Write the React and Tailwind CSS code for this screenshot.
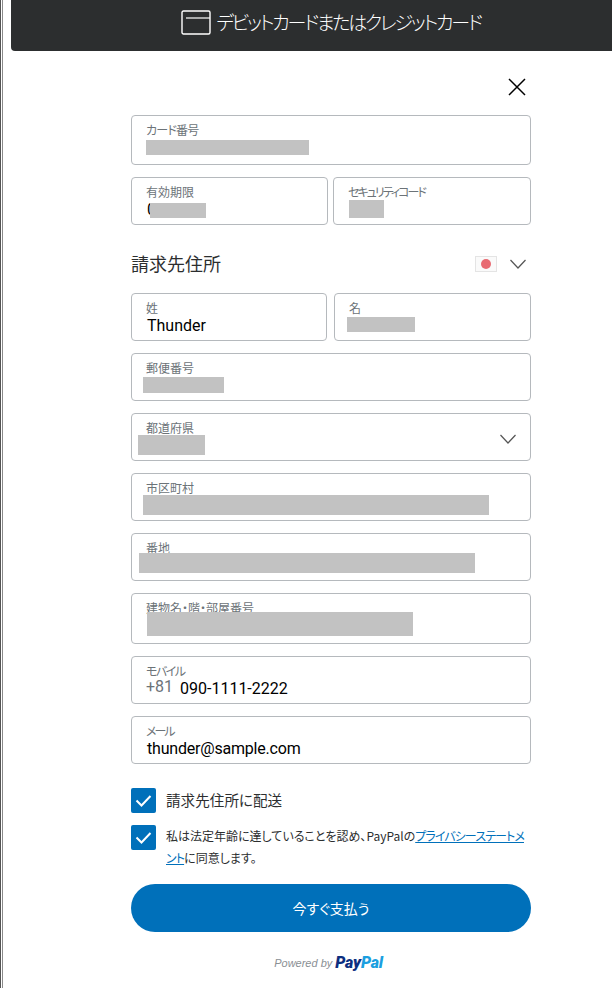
const jp = '"Noto Sans CJK JP","Noto Sans",sans-serif';

function Redact({ className }) {
  return <div className={`absolute bg-[#c2c2c2] ${className}`} />;
}

function Field({ label, className = "", h = "h-[48px]", labelClass = "", value, valueClass = "", children }) {
  return (
    <div className={`relative ${h} rounded border border-[#b5b9bd] bg-white ${className}`}>
      <span className={`absolute left-[14px] top-[6px] text-[12px] leading-[16px] text-[#6c7378] ${labelClass}`}>{label}</span>
      {value && <span className={`absolute left-[15px] top-[21px] font-['Roboto'] text-[16px] leading-[22px] text-black ${valueClass}`}>{value}</span>}
      {children}
    </div>
  );
}

function Chevron({ className }) {
  return (
    <svg className={className} width="18" height="12" viewBox="0 0 18 12" fill="none" stroke="#555" strokeWidth="1.2">
      <path d="M1.5 2 L9 10 L16.5 2" />
    </svg>
  );
}

function Check() {
  return (
    <svg width="25" height="25" viewBox="0 0 25 25" className="shrink-0 rounded-[2px] bg-[#0070ba]" fill="none" stroke="#fff" strokeWidth="2">
      <path d="M5.5 12.5 L10.5 17.5 L19.5 8" />
    </svg>
  );
}

export default function App() {
  return (
    <div className="relative h-[988px] w-[612px] overflow-hidden bg-white [font-feature-settings:'palt']" style={{ fontFamily: jp }}>
      <div className="absolute bottom-0 left-0 top-0 flex w-[3px] justify-between border-l border-[#555]"><div /><div className="w-px bg-[#8a8a8a]" /></div>
      <header className="ml-[11px] flex h-[51px] items-center justify-center rounded-bl-[4px] bg-[#2c2e2f] pb-[6px] pl-[39px] text-[19px] tracking-[-2.2px] text-white">
        <svg width="30" height="25" viewBox="0 0 30 25" fill="none" stroke="#fff" strokeWidth="1.4" className="mr-[5px]">
          <rect x="1" y="1" width="28" height="23" rx="1.5" />
          <path d="M5 8H29" strokeWidth="1.2" />
        </svg>
        <span className="font-light">デビットカードまたはクレジットカード</span>
      </header>

      <div className="ml-[131px] w-[400px]">
        <div className="flex h-[64px] justify-end pr-[5px] pt-[27px]">
          <svg width="18" height="18" viewBox="0 0 18 18" stroke="#000" strokeWidth="1.5" fill="none">
            <path d="M1 1L17 17M17 1L1 17" />
          </svg>
        </div>

        <Field label="カード番号" labelClass="tracking-[-0.8px]" h="h-[50px]">
          <Redact className="left-[14px] top-[24px] h-[15px] w-[163px]" />
        </Field>

        <div className="mt-[12px] flex gap-[5px]">
          <Field label="有効期限" className="w-[197px]">
            <span className="absolute left-[15px] top-[21px] font-['Roboto'] text-[16px] leading-[22px] text-black">0</span>
            <Redact className="left-[18px] top-[25px] h-[15px] w-[56px]" />
          </Field>
          <Field label="セキュリティコード" labelClass="tracking-[-2px]" className="flex-1">
            <Redact className="left-[15px] top-[22px] h-[18px] w-[35px]" />
          </Field>
        </div>

        <div className="mt-[25px] flex h-[28px] items-center justify-between">
          <h2 className="-mt-[2px] text-[18px] font-normal text-[#2c2e2f]">請求先住所</h2>
          <div className="flex items-center gap-[12px] pr-[4px]">
            <div className="flex h-[16px] w-[22px] items-center justify-center border border-[#e4e4e4] bg-[#fafafa]">
              <div className="h-[10px] w-[10px] rounded-full bg-[#e86a72]" />
            </div>
            <Chevron />
          </div>
        </div>

        <div className="mt-[15px] flex gap-[7px]">
          <Field label="姓" value="Thunder" className="w-[196px]" />
          <Field label="名" className="flex-1">
            <Redact className="left-[12px] top-[23px] h-[15px] w-[68px]" />
          </Field>
        </div>

        <Field label="郵便番号" className="mt-[12px]">
          <Redact className="left-[11px] top-[23px] h-[16px] w-[81px]" />
        </Field>

        <Field label="都道府県" className="mt-[12px]">
          <Redact className="left-[6px] top-[21px] h-[20px] w-[67px]" />
          <Chevron className="absolute right-[13px] top-[19px]" />
        </Field>

        <Field label="市区町村" className="mt-[12px]">
          <Redact className="left-[11px] top-[21px] h-[20px] w-[346px]" />
        </Field>

        <Field label="番地" className="mt-[12px]">
          <Redact className="left-[7px] top-[19px] h-[20px] w-[336px]" />
        </Field>

        <Field label="建物名・階・部屋番号" h="h-[51px]" className="mt-[12px]">
          <Redact className="left-[15px] top-[18px] h-[24px] w-[266px]" />
        </Field>

        <Field label="モバイル" labelClass="tracking-[-1.5px]" className="mt-[12px]">
          <span className="absolute left-[14px] top-[19px] font-['Roboto'] text-[16px] leading-[22px] text-[#6c7378]">+81</span>
          <span className="absolute left-[48px] top-[21px] font-['Roboto'] text-[16px] leading-[22px] text-black">090-1111-2222</span>
        </Field>

        <Field label="メール" labelClass="tracking-[-2px]" value="thunder@sample.com" valueClass="tracking-[-0.2px]" className="mt-[12px]" />

        <div className="mt-[24px] flex items-center gap-[10px]">
          <Check />
          <span className="-mt-[2px] text-[14.6px] leading-[25px] text-[#2c2e2f]">請求先住所に配送</span>
        </div>

        <div className="mt-[12px] flex gap-[10px]">
          <Check />
          <p className="w-[361px] text-[12px] leading-[22px] text-[#2c2e2f]">
            私は法定年齢に達していることを認め、PayPalの<span className="tracking-[-0.9px] text-[#0070ba] underline">プライバシーステートメント</span>に同意します。
          </p>
        </div>

        <button className="mt-[15px] block h-[48px] w-[400px] rounded-full bg-[#0070ba] text-[14px] text-white">今すぐ支払う</button>

        <div className="mt-[23px] flex items-center justify-center gap-[3px] pr-[5px]">
          <span className="font-['Liberation_Sans'] text-[11px] italic text-[#8a8f94]">Powered by</span>
          <span className="font-['Roboto'] text-[16px] font-black italic leading-[16px] tracking-[-0.2px]">
            <span className="text-[#0d2f80]">Pay</span><span className="text-[#1b9fe0]">Pal</span>
          </span>
        </div>
      </div>
    </div>
  );
}
